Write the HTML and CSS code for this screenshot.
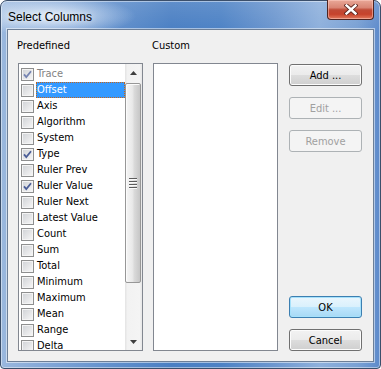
FILE: index.html
```html
<!DOCTYPE html>
<html lang="en">
<head>
    <meta charset="UTF-8" />
    <meta name="viewport" content="width=device-width, initial-scale=1" />
    <title>Select Columns</title>
    <link rel="stylesheet" href="styles.css">
</head>
<body>

    <div class="window">
        <div class="titlebar">
            <span class="title">Select Columns</span>
            <div class="close">
                <svg width="14" height="11" viewBox="0 0 14 11">
                    <path d="M2.5 1.5 L11.5 9.5 M11.5 1.5 L2.5 9.5" stroke="#5a231c" stroke-width="4.2" stroke-linecap="square" fill="none"/>
                    <path d="M2.5 1.5 L11.5 9.5 M11.5 1.5 L2.5 9.5" stroke="#ffffff" stroke-width="2.4" stroke-linecap="square" fill="none"/>
                </svg>
            </div>
        </div>

        <div class="client">
            <div class="col col-list">
                <div class="label">Predefined</div>
                <div class="listbox">
                    <div class="items">
                        <div class="item disabled"><span class="cb"><svg width="11" height="11" viewBox="0 0 11 11"><path d="M2 5.3 L4.3 8 L9 2.3" fill="none" stroke="#7584b2" stroke-width="1.8"/></svg></span><span class="txt">Trace</span></div>
                        <div class="item selected"><span class="cb"></span><span class="txt">Offset</span></div>
                        <div class="item"><span class="cb"></span><span class="txt">Axis</span></div>
                        <div class="item"><span class="cb"></span><span class="txt">Algorithm</span></div>
                        <div class="item"><span class="cb"></span><span class="txt">System</span></div>
                        <div class="item"><span class="cb"><svg width="11" height="11" viewBox="0 0 11 11"><path d="M2 5.3 L4.3 8 L9 2.3" fill="none" stroke="#4a5d97" stroke-width="1.8"/></svg></span><span class="txt">Type</span></div>
                        <div class="item"><span class="cb"></span><span class="txt">Ruler Prev</span></div>
                        <div class="item"><span class="cb"><svg width="11" height="11" viewBox="0 0 11 11"><path d="M2 5.3 L4.3 8 L9 2.3" fill="none" stroke="#4a5d97" stroke-width="1.8"/></svg></span><span class="txt">Ruler Value</span></div>
                        <div class="item"><span class="cb"></span><span class="txt">Ruler Next</span></div>
                        <div class="item"><span class="cb"></span><span class="txt">Latest Value</span></div>
                        <div class="item"><span class="cb"></span><span class="txt">Count</span></div>
                        <div class="item"><span class="cb"></span><span class="txt">Sum</span></div>
                        <div class="item"><span class="cb"></span><span class="txt">Total</span></div>
                        <div class="item"><span class="cb"></span><span class="txt">Minimum</span></div>
                        <div class="item"><span class="cb"></span><span class="txt">Maximum</span></div>
                        <div class="item"><span class="cb"></span><span class="txt">Mean</span></div>
                        <div class="item"><span class="cb"></span><span class="txt">Range</span></div>
                        <div class="item"><span class="cb"></span><span class="txt">Delta</span></div>
                    </div>
                    <div class="scrollbar">
                        <div class="arrow">
                            <svg width="7" height="4" viewBox="0 0 7 4"><path d="M3.5 0 L7 4 L0 4 Z" fill="#3f3f3f"/></svg>
                        </div>
                        <div class="thumb"><span class="grip"></span></div>
                        <div class="arrow arrow-down">
                            <svg width="7" height="4" viewBox="0 0 7 4"><path d="M0 0 L7 0 L3.5 4 Z" fill="#3f3f3f"/></svg>
                        </div>
                    </div>
                </div>
            </div>

            <div class="col col-list col-custom">
                <div class="label">Custom</div>
                <div class="listbox"></div>
            </div>

            <div class="col col-buttons">
                <button class="btn">Add ...</button>
                <button class="btn" disabled>Edit ...</button>
                <button class="btn" disabled>Remove</button>
                <button class="btn btn-default">OK</button>
                <button class="btn">Cancel</button>
            </div>
        </div>
    </div>

</body>
</html>
```

FILE: styles.css
```css
body {
    margin: 0;
    background-color: #ffffff;
    font-family: "DejaVu Sans Condensed", "DejaVu Sans", sans-serif;
    font-stretch: condensed;
    font-size: 11px;
    color: #000;
}

.window {
    width: 367px;
    height: 361px;
    padding: 0 6px 6px 6px;
    border: 1px solid #3b4f6b;
    border-radius: 7px 7px 4px 4px;
    box-shadow: inset 0 0 0 1px rgba(255,255,255,0.45);
    background:
        radial-gradient(ellipse 85px 20px at 50px 15px, rgba(235,243,252,0.9), rgba(235,243,252,0) 100%),
        linear-gradient(to bottom, rgba(255,255,255,0.12), rgba(255,255,255,0) 30px),
        linear-gradient(to right, #9ab8de 0%, #86a9d8 10%, #6391cd 28%, #4a7fc3 45%, #4d82c5 58%, #6d97cf 72%, #8eb0dc 84%, #7aa1d4 94%, #5d8acb 100%);
}

.titlebar {
    height: 28px;
    display: flex;
    align-items: flex-start;
}

.title {
    font-family: "Liberation Sans", sans-serif;
    font-size: 12px;
    color: #000;
    padding: 9px 0 0 1px;
    text-shadow: 0 0 6px rgba(255,255,255,0.9);
}

.close {
    margin-left: auto;
    margin-right: 0;
    margin-top: -1px;
    width: 45px;
    height: 19px;
    border: 1px solid #4e2420;
    border-top: none;
    border-radius: 0 0 4px 4px;
    box-shadow: inset 0 0 0 1px rgba(255,210,200,0.5);
    background: linear-gradient(to bottom, #e9a898 0%, #d98574 40%, #c04a36 52%, #c6432c 75%, #e27a5e 100%);
    display: flex;
    align-items: center;
    justify-content: center;
}

.client {
    height: 331px;
    border: 1px solid #6d7f97;
    box-shadow: 0 0 0 1px rgba(255,255,255,0.5);
    background-color: #f0f0f0;
    padding: 9px 11px 0 10px;
    box-sizing: border-box;
    height: 333px;
    display: flex;
}

.col {
    display: flex;
    flex-direction: column;
}

.col-list {
    width: 125px;
}

.col-custom {
    margin-left: 10px;
}

.label {
    height: 13px;
    line-height: 13px;
    margin: 0 0 11px -1px;
}

.listbox {
    height: 288px;
    box-sizing: border-box;
    border: 1px solid #828790;
    background-color: #fff;
    display: flex;
    overflow: hidden;
}

.items {
    flex: 1;
    padding-top: 2px;
    overflow: hidden;
}

.item {
    height: 16px;
    display: flex;
    align-items: center;
    padding-left: 2px;
}

.cb {
    width: 11px;
    height: 11px;
    flex: none;
    border: 1px solid #8e8f8f;
    background: linear-gradient(135deg, #cfd2d6 0%, #e3e4e6 50%, #f8f8f8 100%);
    box-shadow: inset 0 0 0 1px #f4f4f4;
    margin-right: 2px;
}

.cb svg {
    display: block;
}

.txt {
    flex: 1;
    height: 16px;
    line-height: 16px;
    padding-left: 1px;
    box-sizing: border-box;
}

.disabled .txt {
    color: #838383;
}

.selected .txt {
    background-color: #3399ff;
    color: #fff;
    outline: 1px dotted #c4641a;
    outline-offset: -1px;
}

.scrollbar {
    width: 17px;
    flex: none;
    display: flex;
    flex-direction: column;
    background: linear-gradient(to right, #e3e3e3 0%, #f2f2f2 15%, #f4f4f4 85%, #e6e6e6 100%);
}

.arrow {
    height: 17px;
    flex: none;
    display: flex;
    align-items: center;
    justify-content: center;
}

.arrow-down {
    margin-top: auto;
}

.thumb {
    height: 198px;
    margin: 2px 1px 0 0;
    border: 1px solid #979797;
    border-radius: 2px;
    box-shadow: inset 1px 1px 0 #fbfbfb;
    background: linear-gradient(to right, #f5f5f5 0%, #e9e9e9 45%, #d9d9d9 60%, #c6c6c6 100%);
    display: flex;
    align-items: center;
    justify-content: center;
}

.grip {
    width: 8px;
    height: 11px;
    background: repeating-linear-gradient(to bottom, #5c5c5c 0 1px, #fafafa 1px 2px, transparent 2px 3px);
}

.col-buttons {
    width: 73px;
    margin-left: 11px;
    padding-top: 25px;
    padding-bottom: 10px;
}

.btn {
    height: 22px;
    width: 73px;
    margin: 0 0 11px 0;
    padding: 0;
    font-family: inherit;
    font-stretch: condensed;
    font-size: 11px;
    color: #000;
    border: 1px solid #707070;
    border-radius: 3px;
    box-shadow: inset 0 0 0 1px #fcfcfc;
    background: linear-gradient(to bottom, #f2f2f2 0%, #ebebeb 50%, #dddddd 51%, #cfcfcf 100%);
}

.btn:disabled {
    color: #a0a0a0;
    border-color: #adb2b5;
    box-shadow: none;
    background: #f4f4f4;
}

.btn-default {
    margin-top: auto;
    border-color: #3c7fb1;
    box-shadow: inset 0 0 0 1px #a6e1fb;
    background: linear-gradient(to bottom, #eaf6fd 0%, #d9f0fc 50%, #bee6fd 51%, #a7d9f5 100%);
}

.btn:last-child {
    margin-bottom: 0;
}
```
